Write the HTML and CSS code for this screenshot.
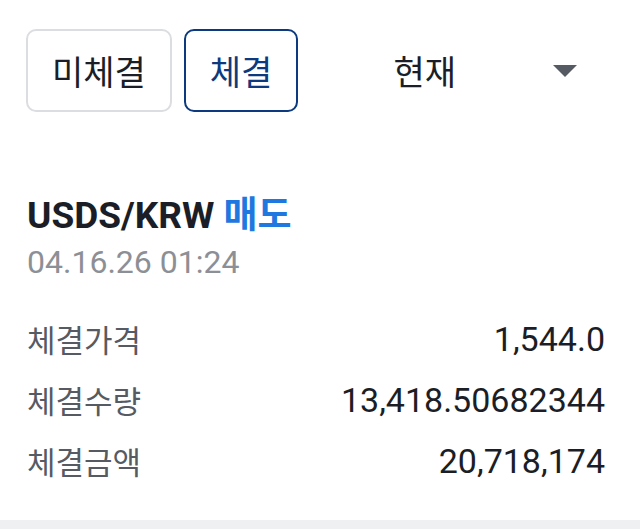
FILE: index.html
```html
<!DOCTYPE html>
<html lang="ko">
<head>
    <meta charset="UTF-8">
    <meta name="viewport" content="width=device-width, initial-scale=1.0">
    <title>체결 내역</title>
    <link rel="stylesheet" href="styles.css">
</head>
<body>

<div class="tab-bar">
    <button class="tab-btn">미체결</button>
    <button class="tab-btn active">체결</button>
    <div class="market-select">
        <span>현재</span>
        <span class="arrow"></span>
    </div>
</div>

<div class="order-item">
    <div class="order-title">USDS/KRW <span class="side-sell">매도</span></div>
    <div class="order-date">04.16.26 01:24</div>

    <div class="order-rows">
        <div class="order-row">
            <span class="row-label">체결가격</span>
            <span class="row-value">1,544.0</span>
        </div>
        <div class="order-row">
            <span class="row-label">체결수량</span>
            <span class="row-value">13,418.50682344</span>
        </div>
        <div class="order-row">
            <span class="row-label">체결금액</span>
            <span class="row-value">20,718,174</span>
        </div>
    </div>
</div>

<div class="divider"></div>

</body>
</html>
```

FILE: styles.css
```css
/* 기본 */
body {
    margin: 0;
    background-color: #fff;
    font-family: Roboto, "Noto Sans CJK KR", sans-serif;
    color: #1b1e26;
}

/* 상단 탭 */
.tab-bar {
    display: flex;
    align-items: center;
    padding: 29px 26px 0 26px;
    gap: 12px;
}

.tab-btn {
    height: 83px;
    padding: 0 24px;
    background-color: #fff;
    border: 2px solid #dcdde0;
    border-radius: 10px;
    font-family: "Noto Sans CJK KR", sans-serif;
    font-size: 34px;
    color: #1b1e26;
}

.tab-btn.active {
    border-color: #0d3a7e;
    color: #0d3a7e;
}

.market-select {
    flex: 1;
    display: flex;
    align-items: center;
    justify-content: space-between;
    padding: 0 37px 0 83px;
    font-family: "Noto Sans CJK KR", sans-serif;
    font-size: 34px;
}

.arrow {
    width: 0;
    height: 0;
    border-left: 12px solid transparent;
    border-right: 12px solid transparent;
    border-top: 12px solid #555a63;
}

/* 체결 항목 */
.order-item {
    padding: 78px 35px 29px 27px;
}

.order-title {
    font-size: 37px;
    font-weight: bold;
    line-height: 44px;
}

.side-sell {
    font-family: "Noto Sans CJK KR", sans-serif;
    color: #1f78e0;
}

.order-date {
    margin-top: 4px;
    font-size: 32px;
    color: #8c9096;
    line-height: 40px;
}

.order-rows {
    margin-top: 26px;
}

.order-row {
    display: flex;
    justify-content: space-between;
    align-items: center;
    height: 61px;
}

.row-label {
    font-family: "Noto Sans CJK KR", sans-serif;
    font-size: 31px;
    color: #555a63;
}

.row-value {
    font-size: 34px;
    color: #1b1e26;
}

.divider {
    height: 14px;
    background-color: #eef0f2;
}
```
